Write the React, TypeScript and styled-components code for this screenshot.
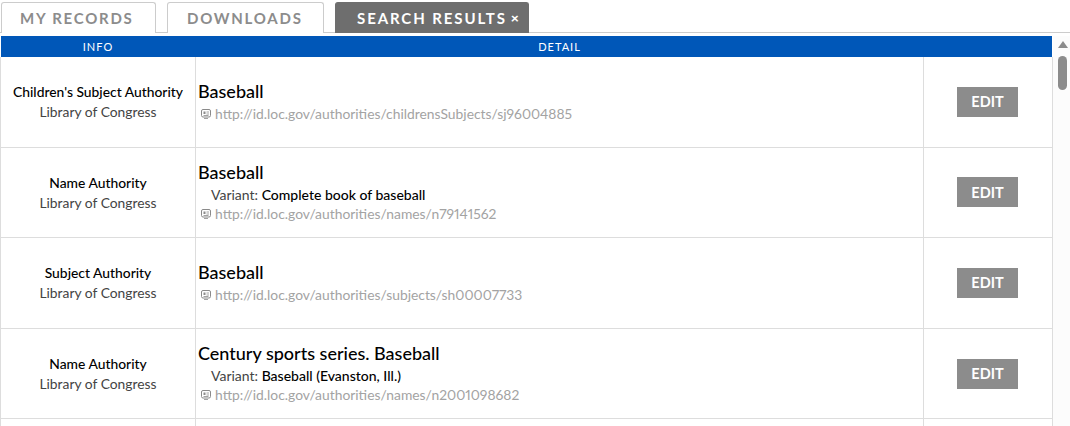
import styled, { createGlobalStyle } from "styled-components";

const GlobalStyle = createGlobalStyle`
    html, body {
        margin: 0;
        padding: 0;
        height: 426px;
        overflow: hidden;
        background: #fff;
        font-family: "Lato", "Open Sans", sans-serif;
    }
`

const Page = styled.div`
    width: 1070px;
    height: 426px;
    overflow: hidden;
    display: flex;
    flex-direction: column;
`

const TabBar = styled.div`
    padding: 2px 0 0 1px;
    box-sizing: border-box;
    display: flex;
    gap: 11px;
    border-bottom: 1px solid #ccc;
    height: 33px;
`

const Tab = styled.div<{ $active?: boolean; $width: number; $pad: number }>`
    width: ${(p) => p.$width}px;
    box-sizing: border-box;
    height: 31px;
    display: flex;
    align-items: center;
    padding-left: ${(p) => p.$pad}px;
    padding-bottom: 1px;
    border: 1px solid ${(p) => (p.$active ? "#6e6e6e" : "#ccc")};
    border-bottom: none;
    border-radius: 3px 3px 0 0;
    background: ${(p) => (p.$active ? "#6e6e6e" : "#fff")};
    color: ${(p) => (p.$active ? "#fff" : "#8c8c8c")};
    font-size: 15px;
    font-weight: 700;
    letter-spacing: ${(p) => (p.$active ? "1.9px" : "1.75px")};
    white-space: nowrap;
`

const Close = styled.span`
    font-size: 14px;
    font-weight: 900;
    margin-left: 4px;
    letter-spacing: 0;
`

const Body = styled.div`
    flex: 1;
    display: flex;
    padding-top: 3px;
    min-height: 0;
`

const TableArea = styled.div`
    width: 1053px;
    flex: none;
`

const HeaderRow = styled.div`
    margin-left: 1px;
    width: 1051px;
    height: 21px;
    background: #0057b8;
    color: #fff;
    display: grid;
    grid-template-columns: 194px 729px 1fr;
    align-items: center;
    font-size: 11px;
    letter-spacing: 1px;
    line-height: 21px;
`

const HeadCell = styled.div`
    text-align: center;
    padding-bottom: 1px;
`

const Row = styled.div<{ $height: number }>`
    height: ${(p) => p.$height}px;
    box-sizing: border-box;
    display: grid;
    grid-template-columns: 195px 728px 1fr;
    border-left: 1px solid #ddd;
    border-right: 1px solid #ddd;
    border-bottom: 1px solid #ddd;
`

const InfoCell = styled.div`
    border-right: 1px solid #ddd;
    display: flex;
    flex-direction: column;
    align-items: center;
    justify-content: center;
    gap: 4px;
    padding-top: 1px;
    font-size: 13.85px;
    line-height: 16px;
`

const InfoTitle = styled.div`
    color: #000;
    font-weight: 500;
`

const InfoSource = styled.div`
    color: #444;
`

const DetailCell = styled.div`
    border-right: 1px solid #ddd;
    display: flex;
    flex-direction: column;
    justify-content: center;
    padding-left: 2px;
`

const Title = styled.div`
    color: #000;
    font-size: 18px;
    font-weight: 500;
    line-height: 20px;
`

const Variant = styled.div`
    color: #444;
    font-size: 14px;
    line-height: 18px;
    margin: 4px 0 -3px 13px;
`

const VariantValue = styled.span`
    color: #000;
    font-weight: 500;
`

const UriLine = styled.div`
    display: flex;
    align-items: center;
    gap: 4px;
    color: #a3a3a3;
    font-size: 13.85px;
    font-variant-numeric: proportional-nums;
    line-height: 18px;
    margin: 4px 0 0 3px;
`

const ActionCell = styled.div`
    display: flex;
    align-items: center;
    justify-content: center;
    padding-right: 1px;
`

const EditButton = styled.div`
    width: 61px;
    height: 30px;
    background: #8c8c8c;
    color: #fff;
    display: flex;
    align-items: center;
    justify-content: center;
    font-size: 14.5px;
    font-weight: 700;
`

const ScrollTrack = styled.div`
    flex: 1;
    background: #fcfcfc;
    display: flex;
    flex-direction: column;
    align-items: center;
    padding: 5px 0 0 2px;
`

const Arrow = styled.div`
    width: 0;
    height: 0;
    border-left: 5px solid transparent;
    border-right: 5px solid transparent;
    border-bottom: 7px solid #8c8c8c;
`

const Thumb = styled.div`
    width: 9px;
    height: 34px;
    margin-top: 8px;
    border-radius: 5px;
    background: #8c8c8c;
`

const UriIcon = () => (
    <svg width="10" height="10" viewBox="0 0 10 10" fill="none">
        <rect x="0.5" y="0.5" width="9" height="7.5" rx="1.5" stroke="#8a8a8a" />
        <path d="M2.5 2.5h2v2.5h-2z" fill="#8a8a8a" />
        <path d="M5.5 3H8M5.5 5H8M2.5 6.5h5M3 9.5h4" stroke="#8a8a8a" strokeWidth="0.8" />
    </svg>
)

type Record = {
    height: number;
    info: string;
    title: string;
    variant?: string;
    uri: string;
}

const records: Record[] = [
    { height: 90.5, info: "Children's Subject Authority", title: "Baseball", uri: "http://id.loc.gov/authorities/childrensSubjects/sj96004885" },
    { height: 90, info: "Name Authority", title: "Baseball", variant: "Complete book of baseball", uri: "http://id.loc.gov/authorities/names/n79141562" },
    { height: 91.5, info: "Subject Authority", title: "Baseball", uri: "http://id.loc.gov/authorities/subjects/sh00007733" },
    { height: 90, info: "Name Authority", title: "Century sports series. Baseball", variant: "Baseball (Evanston, Ill.)", uri: "http://id.loc.gov/authorities/names/n2001098682" },
    { height: 91, info: "", title: "", uri: "" },
]

export default function App() {
    return (
        <Page>
            <GlobalStyle />
            <TabBar>
                <Tab $width={155} $pad={18}>MY RECORDS</Tab>
                <Tab $width={157} $pad={19}>DOWNLOADS</Tab>
                <Tab $active $width={194} $pad={21}>
                    SEARCH RESULTS<Close>×</Close>
                </Tab>
            </TabBar>
            <Body>
                <TableArea>
                    <HeaderRow>
                        <HeadCell>INFO</HeadCell>
                        <HeadCell>DETAIL</HeadCell>
                        <HeadCell />
                    </HeaderRow>
                    {records.map((r, i) => (
                        <Row key={i} $height={r.height}>
                            <InfoCell>
                                {r.info && <InfoTitle>{r.info}</InfoTitle>}
                                {r.info && <InfoSource>Library of Congress</InfoSource>}
                            </InfoCell>
                            <DetailCell>
                                {r.title && <Title>{r.title}</Title>}
                                {r.variant && (
                                    <Variant>
                                        Variant: <VariantValue>{r.variant}</VariantValue>
                                    </Variant>
                                )}
                                {r.uri && (
                                    <UriLine>
                                        <UriIcon />
                                        {r.uri}
                                    </UriLine>
                                )}
                            </DetailCell>
                            <ActionCell>{r.info && <EditButton>EDIT</EditButton>}</ActionCell>
                        </Row>
                    ))}
                </TableArea>
                <ScrollTrack>
                    <Arrow />
                    <Thumb />
                </ScrollTrack>
            </Body>
        </Page>
    )
}
